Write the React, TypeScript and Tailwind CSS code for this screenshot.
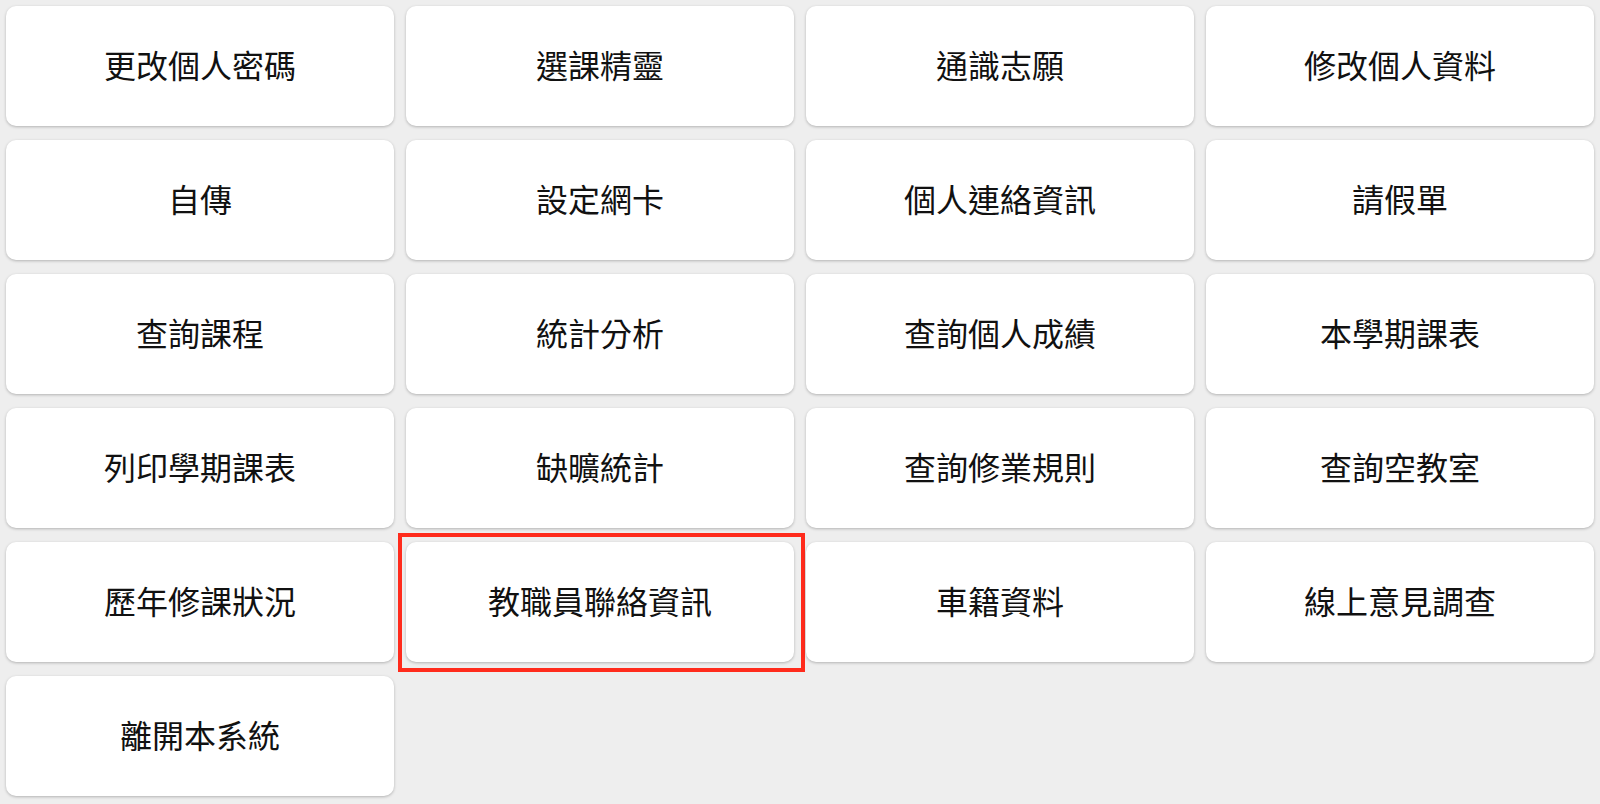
import React from "react";

const items: string[] = [
  "更改個人密碼",
  "選課精靈",
  "通識志願",
  "修改個人資料",
  "自傳",
  "設定網卡",
  "個人連絡資訊",
  "請假單",
  "查詢課程",
  "統計分析",
  "查詢個人成績",
  "本學期課表",
  "列印學期課表",
  "缺曠統計",
  "查詢修業規則",
  "查詢空教室",
  "歷年修課狀況",
  "教職員聯絡資訊",
  "車籍資料",
  "線上意見調查",
  "離開本系統",
];

// the one the screenshot marks with a red frame
const highlighted = "教職員聯絡資訊";

const MenuCard: React.FC<{ label: string; marked?: boolean }> = ({ label, marked = false }) => {
  return (
    <div className="relative">
      <button className="flex h-[120px] w-full items-center justify-center rounded-[10px] bg-white pb-1 text-[32px] leading-none text-[#111111] shadow-[0_1px_3px_rgba(0,0,0,0.25)]">
        {label}
      </button>
      {marked && (
        <div className="pointer-events-none absolute -top-[9px] -bottom-[10px] -left-[8px] -right-[11px] border-4 border-[#ff2b1c]" />
      )}
    </div>
  );
};

export default function App() {
  return (
    <div
      className="min-h-screen bg-[#eeeeee]"
      style={{ fontFamily: '"Noto Sans CJK TC", "Noto Sans", sans-serif' }}
    >
      <div className="grid grid-cols-4 gap-x-3 gap-y-[14px] px-1.5 pt-1.5">
        {items.map((label) => (
          <MenuCard key={label} label={label} marked={label === highlighted} />
        ))}
      </div>
    </div>
  );
}
